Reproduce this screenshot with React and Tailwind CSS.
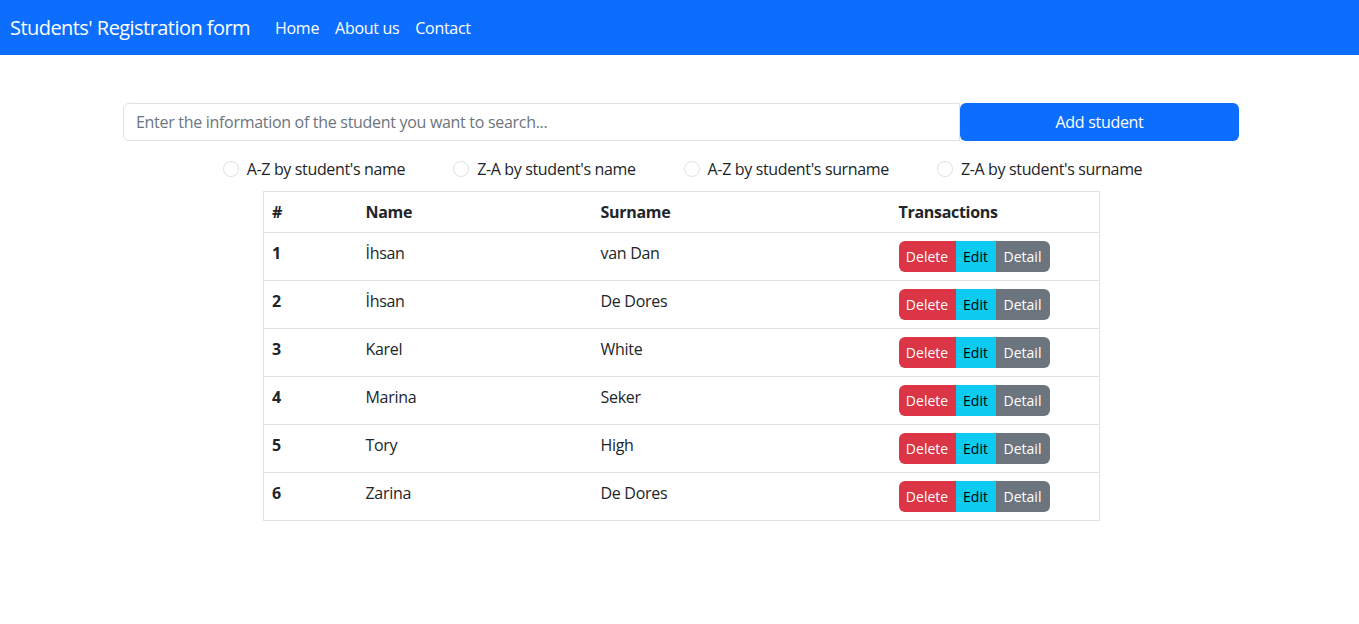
const students = [
  { id: 1, name: 'İhsan', surname: 'van Dan' },
  { id: 2, name: 'İhsan', surname: 'De Dores' },
  { id: 3, name: 'Karel', surname: 'White' },
  { id: 4, name: 'Marina', surname: 'Seker' },
  { id: 5, name: 'Tory', surname: 'High' },
  { id: 6, name: 'Zarina', surname: 'De Dores' },
];

const sorts = [
  "A-Z by student's name",
  "Z-A by student's name",
  "A-Z by student's surname",
  "Z-A by student's surname",
];

const App = () => {
  return (
    <div className="min-h-screen bg-white text-[#212529] font-['Open_Sans',sans-serif] text-base">
      <nav className="flex items-center h-[55px] bg-[#0d6efd] px-[10px]">
        <span className="text-white text-[20px] mr-[25px] tracking-[-0.55px]">Students' Registration form</span>
        <a className="text-white text-[16px] mr-4 tracking-[-0.3px]">Home</a>
        <a className="text-white text-[16px] mr-4 tracking-[-0.3px]">About us</a>
        <a className="text-white text-[16px] tracking-[-0.3px]">Contact</a>
      </nav>

      <div className="w-[1116px] ml-[123px] mt-12">
        <div className="flex">
          <input
            className="w-[837px] h-[38px] border border-[#dee2e6] rounded-l-md px-3 text-base outline-none placeholder:text-[#6c757d] tracking-[-0.3px]"
            placeholder="Enter the information of the student you want to search..."
          />
          <button className="w-[279px] h-[38px] bg-[#0d6efd] text-white rounded-md tracking-[-0.3px]">Add student</button>
        </div>

        <div className="flex justify-center gap-12 mt-4 pl-[3px]">
          {sorts.map((s) => (
            <label key={s} className="flex items-center gap-2 h-6 tracking-[-0.35px]">
              <span className="w-4 h-4 rounded-full border border-[#dee2e6] bg-white"></span>
              {s}
            </label>
          ))}
        </div>

        <table className="w-[837px] ml-[140px] mt-[10px] border border-[#dee2e6] border-collapse text-left">
          <thead>
            <tr className="border-b border-[#dee2e6]">
              <th className="w-[94px] p-2 font-bold leading-6 tracking-[-0.3px]">#</th>
              <th className="w-[235px] p-2 font-bold leading-6 tracking-[-0.3px]">Name</th>
              <th className="w-[298px] p-2 font-bold leading-6 tracking-[-0.3px]">Surname</th>
              <th className="p-2 font-bold leading-6 tracking-[-0.3px]">Transactions</th>
            </tr>
          </thead>
          <tbody>
            {students.map((st) => (
              <tr key={st.id} className="border-b border-[#dee2e6] align-top">
                <td className="p-2 font-bold leading-6">{st.id}</td>
                <td className="p-2 leading-6 tracking-[-0.3px]">{st.name}</td>
                <td className="p-2 leading-6 tracking-[-0.3px]">{st.surname}</td>
                <td className="p-2">
                  <div className="flex h-[31px] text-[14px]">
                    <button className="w-[57px] bg-[#dc3545] text-white rounded-l-md">Delete</button>
                    <button className="w-[40px] bg-[#0dcaf0] text-black">Edit</button>
                    <button className="w-[54px] bg-[#6c757d] text-white rounded-r-md">Detail</button>
                  </div>
                </td>
              </tr>
            ))}
          </tbody>
        </table>
      </div>
    </div>
  );
};

export default App;
